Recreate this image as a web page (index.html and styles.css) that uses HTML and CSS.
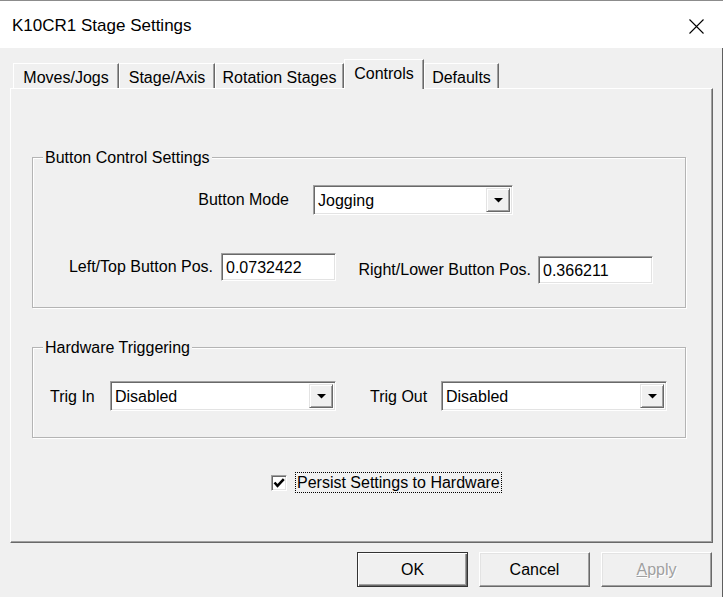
FILE: index.html
```html
<!DOCTYPE html>
<html>
<head>
<meta charset="utf-8">
<title>K10CR1 Stage Settings</title>
<link rel="stylesheet" href="styles.css">
</head>
<body>
<div class="window">
  <div class="titlebar">
    <span class="title">K10CR1 Stage Settings</span>
    <svg class="close" viewBox="0 0 15 15" width="15" height="15"><path d="M0.5 0.5 L14.5 14.5 M14.5 0.5 L0.5 14.5" stroke="#000" stroke-width="1.1" fill="none"/></svg>
  </div>
  <div class="client">
    <div class="tabs">
      <div class="tab tab-moves">Moves/Jogs</div>
      <div class="tab tab-stage">Stage/Axis</div>
      <div class="tab tab-rot">Rotation Stages</div>
      <div class="tab tab-ctrl selected">Controls</div>
      <div class="tab tab-def">Defaults</div>
    </div>
    <div class="panel">
      <fieldset class="group group-buttons">
        <legend>Button Control Settings</legend>
        <div class="mode-row">
          <span class="lbl lbl-mode">Button Mode</span>
          <div class="combo combo-mode"><span class="combo-text">Jogging</span><span class="combo-btn"><svg viewBox="0 0 9 5" width="9" height="5"><polygon points="0,0 9,0 4.5,4.5" fill="#000"/></svg></span></div>
        </div>
        <div class="pos-row">
          <span class="lbl lbl-left">Left/Top Button Pos.</span>
          <div class="edit edit-left">0.0732422</div>
          <span class="lbl lbl-right">Right/Lower Button Pos.</span>
          <div class="edit edit-right">0.366211</div>
        </div>
      </fieldset>
      <fieldset class="group group-trig">
        <legend>Hardware Triggering</legend>
        <div class="trig-row">
          <span class="lbl lbl-trigin">Trig In</span>
          <div class="combo combo-trig"><span class="combo-text">Disabled</span><span class="combo-btn"><svg viewBox="0 0 9 5" width="9" height="5"><polygon points="0,0 9,0 4.5,4.5" fill="#000"/></svg></span></div>
          <span class="lbl lbl-trigout">Trig Out</span>
          <div class="combo combo-trig"><span class="combo-text">Disabled</span><span class="combo-btn"><svg viewBox="0 0 9 5" width="9" height="5"><polygon points="0,0 9,0 4.5,4.5" fill="#000"/></svg></span></div>
        </div>
      </fieldset>
      <div class="check-row">
        <span class="checkbox"><svg viewBox="0 0 12 12" width="12" height="12"><polyline points="1.5,5.5 4.5,8.8 10.8,2.2" fill="none" stroke="#000" stroke-width="2.6"/></svg></span>
        <span class="check-label">Persist Settings to Hardware</span>
      </div>
    </div>
    <div class="buttons">
      <div class="btn btn-default">OK</div>
      <div class="btn">Cancel</div>
      <div class="btn btn-disabled"><span><u>A</u>pply</span></div>
    </div>
  </div>
</div>
</body>
</html>
```
FILE: styles.css
```css
* { box-sizing: border-box; }

body {
  margin: 0;
  font-family: "Liberation Sans", Arial, sans-serif;
  font-size: 16px;
  line-height: 18px;
  color: #000;
  background: #f0f0f0;
}

.window {
  width: 723px;
  height: 597px;
  display: flex;
  flex-direction: column;
  overflow: hidden;
}

.titlebar {
  height: 48px;
  flex: none;
  background: #fff;
  border-top: 1px solid #8c8c8c;
  display: flex;
  align-items: center;
  justify-content: space-between;
  padding: 3px 19px 0 12px;
}

.title { font-size: 17px; }

.close { display: block; }

.client {
  flex: 1;
  background: #f0f0f0;
  padding: 11px 9px 0 10px;
  border-right: 1px solid #5f5f5f;
}

.tabs {
  display: flex;
  align-items: flex-end;
  height: 29px;
  padding-left: 3px;
  position: relative;
  z-index: 1;
}

.tab {
  height: 25px;
  border: 1px solid;
  border-color: #fff #696969 transparent #fff;
  border-bottom: none;
  box-shadow: inset -1px 0 #a0a0a0;
  display: flex;
  align-items: center;
  justify-content: center;
  background: #f0f0f0;
  padding-top: 3px;
}

.tab-moves { width: 106px; }
.tab-stage { width: 96px; }
.tab-rot { width: 129px; }
.tab-ctrl { width: 80px; }
.tab-def { width: 75px; }

.tab.selected {
  height: 30px;
  margin-bottom: -1px;
  padding-top: 0;
  padding-bottom: 2px;
}

.panel {
  height: 455px;
  background: #f0f0f0;
  border: 1px solid;
  border-color: #fff #696969 #696969 #fff;
  box-shadow: inset -1px -1px #a0a0a0;
  padding: 59px 0 0 21px;
}

.group {
  width: 654px;
  margin: 0;
  padding: 0;
  border: 1px solid #b4b4b4;
  box-shadow: inset 1px 1px #fff, 1px 1px #fff;
  min-inline-size: 0;
}

.group legend {
  margin-left: 10px;
  padding: 1px 2px 0;
  line-height: 18px;
  background: #f0f0f0;
}

.group-buttons { padding-bottom: 23px; }

.group-trig {
  margin-top: 30px;
  padding-bottom: 26px;
}

.lbl { display: block; white-space: nowrap; }

.mode-row {
  display: flex;
  align-items: center;
  margin-top: 18px;
}

.lbl-mode {
  width: 256px;
  text-align: right;
  margin-right: 24px;
}

.combo {
  height: 30px;
  border: 1px solid;
  border-color: #a0a0a0 #fff #fff #a0a0a0;
  box-shadow: inset 1px 1px #696969, inset -1px -1px #e3e3e3;
  background: #fff;
  display: flex;
  align-items: center;
  padding: 2px;
}

.combo-mode { width: 200px; }
.combo-trig { width: 226px; }

.combo-text {
  flex: 1;
  padding-left: 2px;
  padding-top: 2px;
  white-space: nowrap;
}

.combo-btn {
  width: 24px;
  height: 24px;
  border: 1px solid;
  border-color: #e3e3e3 #696969 #696969 #e3e3e3;
  box-shadow: inset 1px 1px #fff, inset -1px -1px #a0a0a0;
  background: #f0f0f0;
  display: flex;
  align-items: center;
  justify-content: center;
  padding-top: 1px;
}

.combo-btn svg { display: block; }

.pos-row {
  display: flex;
  align-items: flex-start;
  margin-top: 38px;
}

.lbl-left {
  width: 180px;
  text-align: right;
  line-height: 28px;
  margin-right: 8px;
}

.lbl-right {
  width: 195px;
  text-align: right;
  line-height: 28px;
  margin-right: 7px;
  margin-top: 3px;
}

.edit {
  width: 115px;
  height: 28px;
  border: 1px solid;
  border-color: #a0a0a0 #fff #fff #a0a0a0;
  box-shadow: inset 1px 1px #696969, inset -1px -1px #e3e3e3;
  background: #fff;
  display: flex;
  align-items: center;
  padding-left: 4px;
  padding-top: 1px;
}

.edit-right { margin-top: 3px; }

.trig-row {
  display: flex;
  align-items: center;
  margin-top: 24px;
  padding-left: 17px;
}

.lbl-trigin { width: 60px; padding-top: 2px; }

.lbl-trigout {
  width: 71px;
  margin-left: 34px;
  padding-top: 2px;
}

.check-row {
  display: flex;
  align-items: center;
  height: 21px;
  margin-top: 34px;
  padding-left: 239px;
}

.checkbox {
  width: 16px;
  height: 16px;
  border: 1px solid;
  border-color: #a0a0a0 #fff #fff #a0a0a0;
  box-shadow: inset 1px 1px #696969, inset -1px -1px #e3e3e3;
  background: #fff;
  display: flex;
  align-items: center;
  justify-content: center;
  margin-right: 8px;
}

.checkbox svg { display: block; }

.check-label {
  border: 1px dotted #000;
  padding: 0 1px;
  line-height: 19px;
  white-space: nowrap;
}

.buttons {
  display: flex;
  justify-content: flex-end;
  gap: 11px;
  margin-top: 9px;
  padding-right: 1px;
}

.btn {
  width: 111px;
  height: 35px;
  border: 1px solid;
  border-color: #fff #696969 #696969 #fff;
  box-shadow: inset -1px -1px #a0a0a0, inset 1px 1px #e3e3e3;
  background: #f0f0f0;
  display: flex;
  align-items: center;
  justify-content: center;
}

.btn-default {
  border-color: #333;
  box-shadow: inset 1px 1px #fff, inset -1px -1px #696969, inset -2px -2px #a0a0a0;
}

.btn-disabled {
  color: #a0a0a0;
  text-shadow: 1px 1px #fff;
}
```
